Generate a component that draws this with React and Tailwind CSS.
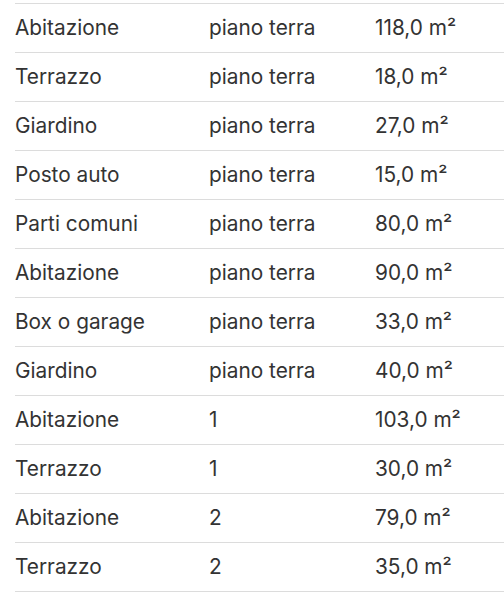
import React from 'react';

const rows = [
  ['Abitazione', 'piano terra', '118,0 m²'],
  ['Terrazzo', 'piano terra', '18,0 m²'],
  ['Giardino', 'piano terra', '27,0 m²'],
  ['Posto auto', 'piano terra', '15,0 m²'],
  ['Parti comuni', 'piano terra', '80,0 m²'],
  ['Abitazione', 'piano terra', '90,0 m²'],
  ['Box o garage', 'piano terra', '33,0 m²'],
  ['Giardino', 'piano terra', '40,0 m²'],
  ['Abitazione', '1', '103,0 m²'],
  ['Terrazzo', '1', '30,0 m²'],
  ['Abitazione', '2', '79,0 m²'],
  ['Terrazzo', '2', '35,0 m²'],
];

export default function App() {
  return (
    <div className="w-[504px] h-[592px] bg-white pt-[3px] pl-[15px] overflow-hidden" style={{ fontFamily: 'Inter, "Noto Sans", sans-serif' }}>
      <div className="border-b border-[#dcdcdc]">
        {rows.map((r, i) => (
          <div key={i} className="flex items-center h-[49px] border-t border-[#dcdcdc] text-[20.8px] text-[#333333]">
            <span className="w-[194px]">{r[0]}</span>
            <span className="w-[166px]">{r[1]}</span>
            <span>{r[2]}</span>
          </div>
        ))}
      </div>
    </div>
  );
}
